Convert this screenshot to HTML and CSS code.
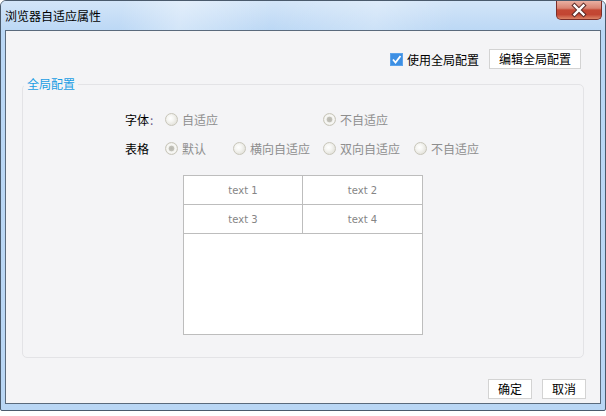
FILE: index.html
```html
<!DOCTYPE html>
<html lang="zh-CN">

<head>
	<meta charset="UTF-8">
	<meta name="viewport" content="width=device-width, initial-scale=1.0">
	<title>浏览器自适应属性</title>
	<link rel="stylesheet" href="styles.css">
</head>

<body>
	<div class="window">
		<div class="titlebar">
			<span class="title">浏览器自适应属性</span>
			<span class="close">
				<svg width="44" height="18" viewBox="0 0 44 18">
					<path d="M17.5 4.5 L26.5 13.5 M26.5 4.5 L17.5 13.5" stroke="#5a2a26" stroke-width="4.4" stroke-linecap="square" fill="none"/>
					<path d="M17.5 4.5 L26.5 13.5 M26.5 4.5 L17.5 13.5" stroke="#fff" stroke-width="2.4" stroke-linecap="square" fill="none"/>
				</svg>
			</span>
		</div>

		<div class="client">
			<div class="toprow">
				<span class="checkbox">
					<svg width="13" height="13" viewBox="0 0 13 13">
						<rect x="0" y="0" width="13" height="13" fill="#3d8fe3"/>
						<rect x="0.5" y="0.5" width="12" height="12" fill="none" stroke="#5ba3ec"/>
						<path d="M3 6.5 L5.5 9.5 L10.5 3" stroke="#fff" stroke-width="1.8" fill="none"/>
					</svg>
				</span>
				<span class="check-label">使用全局配置</span>
				<button class="btn btn-edit">编辑全局配置</button>
			</div>

			<fieldset class="group">
				<legend>全局配置</legend>
				<div class="options">
					<span class="opt-label">字体<span class="colon">:</span></span>
					<label class="opt"><span class="radio"></span>自适应</label>
					<label class="opt col-4"><span class="radio checked"></span>不自适应</label>

					<span class="opt-label">表格</span>
					<label class="opt"><span class="radio checked"></span>默认</label>
					<label class="opt"><span class="radio"></span>横向自适应</label>
					<label class="opt"><span class="radio"></span>双向自适应</label>
					<label class="opt"><span class="radio"></span>不自适应</label>
				</div>

				<div class="preview">
					<table>
						<tr>
							<td>text 1</td>
							<td>text 2</td>
						</tr>
						<tr>
							<td>text 3</td>
							<td>text 4</td>
						</tr>
					</table>
				</div>
			</fieldset>

			<div class="footer">
				<button class="btn btn-small">确定</button>
				<button class="btn btn-small">取消</button>
			</div>
		</div>
	</div>
</body>
</html>
```

FILE: styles.css
```css
body {
	margin: 0;
	padding: 0;
	background-color: #fff;
	font-family: "Noto Sans CJK SC", "Noto Sans", sans-serif;
	font-size: 12px;
}

.window {
	width: 606px;
	height: 411px;
	box-sizing: border-box;
	border: 1px solid #4a5a6c;
	border-radius: 6px 6px 2px 2px;
	background: linear-gradient(#cfe2f7, #bad7f5 30px, #b9d6f4);
	display: flex;
	flex-direction: column;
}

.titlebar {
	height: 29px;
	display: flex;
	align-items: flex-start;
	border-radius: 5px 5px 0 0;
	background:
		linear-gradient(100deg, rgba(255, 255, 255, 0) 20%, rgba(255, 255, 255, 0.35) 30%, rgba(255, 255, 255, 0) 45%, rgba(255, 255, 255, 0.25) 62%, rgba(255, 255, 255, 0) 75%),
		linear-gradient(#d3e5f8, #bcd8f5);
}

.title {
	padding: 7px 0 0 4px;
	line-height: 16px;
	color: #000;
}

.close {
	margin-left: auto;
	margin-right: 3px;
	width: 44px;
	height: 18px;
	border: 1px solid #7b2e29;
	border-top: none;
	border-radius: 0 0 5px 5px;
	background: linear-gradient(#eab0a2, #d98472 40%, #c44834 50%, #c24532 75%, #dc8466);
	display: flex;
}

.client {
	flex: 1;
	margin: 0 4px 6px;
	border: 1px solid #5a6a7c;
	background-color: #f4f4f6;
	display: flex;
	flex-direction: column;
}

.toprow {
	display: flex;
	justify-content: flex-end;
	align-items: center;
	height: 20px;
	margin: 18px 19px 0 0;
}

.checkbox {
	width: 13px;
	height: 13px;
	margin-right: 4px;
	display: flex;
}

.check-label {
	margin-right: 10px;
	color: #000;
}

.btn {
	height: 20px;
	padding: 0;
	font-family: inherit;
	font-size: 12px;
	line-height: 18px;
	color: #000;
	background-color: #fff;
	border: 1px solid #d3d3d3;
	border-radius: 0;
}

.btn-edit {
	width: 92px;
}

.group {
	margin: 8px 16px 0;
	padding: 0 0 22px;
	min-width: 0;
	border: 1px solid #e3e3e6;
	border-radius: 5px;
}

.group legend {
	margin-left: 1px;
	padding: 0 3px;
	line-height: 14px;
	color: #1a9de4;
}

.options {
	display: grid;
	grid-template-columns: 40px 68px 90px 91px auto;
	grid-auto-rows: 20px;
	row-gap: 9px;
	padding-left: 102px;
	margin-top: 18px;
}

.opt-label {
	grid-column: 1;
	display: flex;
	align-items: center;
	color: #000;
}

.opt-label .colon {
	color: #6a5a8a;
	margin-left: 1px;
}

.opt {
	display: flex;
	align-items: center;
	gap: 4px;
	color: #8e8e8e;
	white-space: nowrap;
}

.col-4 {
	grid-column: 4;
}

.radio {
	flex: none;
	width: 13px;
	height: 13px;
	box-sizing: border-box;
	border-radius: 50%;
	border: 1px solid #c8c6ba;
	background: radial-gradient(circle at 40% 40%, #fff 0, #f6f6f3 3px, #e4e3dc 7px);
}

.radio.checked {
	background: radial-gradient(circle, #b9b8b0 0, #c2c1b9 2.5px, #f1f1ed 3.2px, #f8f8f6 4.5px, #e3e2db 6px);
}

.preview {
	width: 240px;
	height: 160px;
	box-sizing: border-box;
	margin: 17px auto 0;
	border: 1px solid #bdbdbd;
	background-color: #fff;
}

.preview table {
	width: 100%;
	border-collapse: separate;
	border-spacing: 0;
	table-layout: fixed;
}

.preview td {
	height: 28px;
	padding: 0;
	border-bottom: 1px solid #bdbdbd;
	text-align: center;
	font-family: "DejaVu Sans", sans-serif;
	font-size: 10px;
	color: #858585;
}

.preview td:first-child {
	width: 118px;
	border-right: 1px solid #bdbdbd;
}

.footer {
	display: flex;
	justify-content: flex-end;
	gap: 10px;
	margin: 21px 14px 0 0;
}

.btn-small {
	width: 44px;
}
```
